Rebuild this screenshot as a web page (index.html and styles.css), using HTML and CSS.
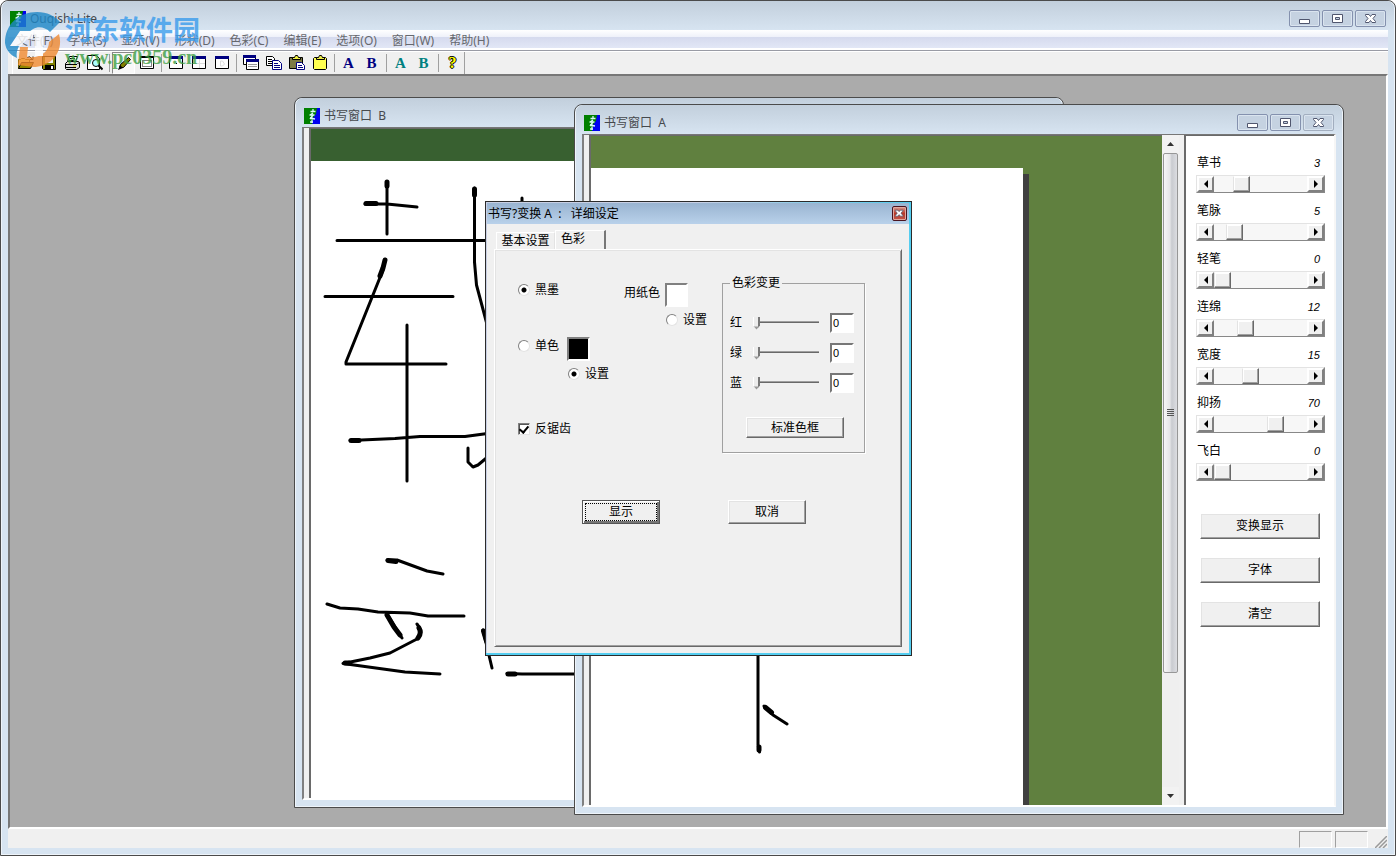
FILE: index.html
```html
<!DOCTYPE html>
<html lang="zh-CN">
<head>
<meta charset="utf-8">
<title>Ouqishi Lite</title>
<link rel="stylesheet" href="styles.css">
</head>
<body>
<svg class="defs" aria-hidden="true">
  <defs>
    <symbol id="app" viewBox="0 0 16 16">
      <path fill="#008000" d="M0 0h16v16H0z"/><path fill="#0000f0" d="M13 0h3v16H8l1-6 3-4z"/>
      <path fill="none" stroke="#d8f8f8" stroke-width="1.3" d="M9 1v3M6.500 3.500h5M9 5L6 7M5.500 7h5M9 7l-3 4M6 10l5 1M8 9v6M6 14h3"/>
    </symbol>
    <symbol id="min" viewBox="0 0 12 12"><path fill="#fff" stroke="#50566e" d="M.5 6.500h10v4H.5z"/></symbol>
    <symbol id="max" viewBox="0 0 12 12"><path fill="#fff" stroke="#50566e" d="M.5 1.500h10v8H.5z"/><path fill="#c5d2e2" stroke="#50566e" d="M3.500 4.500h4v2h-4z"/></symbol>
    <symbol id="cls" viewBox="0 0 12 12"><path fill="#fff" stroke="#50566e" d="M.5 1.500h3.500l1.500 2 1.500-2h3.500v1L8 5.500l2.500 3v1H7l-1.500-2-1.500 2H.5v-1l2.500-3-2.500-3z"/></symbol>
    <symbol id="win" viewBox="0 0 16 16"><path fill="#fff" stroke="#000" d="M1.500 1.500h13v12h-13z"/><path fill="#000080" d="M1 1h14v3H1z"/></symbol>
  </defs>
</svg>
<div class="app">
  <header class="titlebar">
    <svg class="app-icon"><use href="#app"/></svg>
    <h1 class="caption">Ouqishi Lite</h1>
    <div class="win-buttons">
      <button class="win-btn" aria-label="最小化"><svg><use href="#min"/></svg></button>
      <button class="win-btn" aria-label="最大化"><svg><use href="#max"/></svg></button>
      <button class="win-btn" aria-label="关闭"><svg><use href="#cls"/></svg></button>
    </div>
  </header>
  <nav class="menubar">
    <button>文件(F)</button><button>字体(S)</button><button>显示(V)</button><button>形状(D)</button><button>色彩(C)</button><button>编辑(E)</button><button>选项(O)</button><button>窗口(W)</button><button>帮助(H)</button>
  </nav>
  <div class="toolbar">
    <div class="tools">
      <button aria-label="打开"><svg viewBox="0 0 16 16"><path fill="#ff9" stroke="#6b6400" d="M.5 13.500v-9h2l1-1h3l1 1h4v3"/><path fill="#8c8400" stroke="#000" d="M.5 13.500l3-6h12l-3 6z"/><path fill="none" stroke="#000" d="M9 2.500q3-2 5 1.500M15 1.500v3h-3"/></svg></button>
      <button aria-label="保存"><svg viewBox="0 0 16 16"><path fill="#808000" stroke="#000" d="M1.500 1.500h13v13h-12l-1-1z"/><path fill="#f4f4f4" d="M4 2h8v6H4z"/><path d="M4 10h9v5H4z"/><path fill="#fff" d="M10 11h2v3h-2z"/></svg></button>
      <button aria-label="打印"><svg viewBox="0 0 16 16"><path fill="#fff" stroke="#000" d="M5.500 1.500h8l-2 5h-8z"/><path stroke="#000" d="M6 3.500h5M5 5.500h5"/><path fill="#ddd" stroke="#000" d="M1.500 8.500l2-2h11l1 1v5l-3 2h-10l-1-1z"/><path stroke="#000" d="M1 9.500h12M2 12.500h10M13.500 9l2-2"/><path stroke="#dd0" d="M9 11h3"/></svg></button>
      <button aria-label="打印预览"><svg viewBox="0 0 16 16"><path fill="#fff" stroke="#000" d="M.5 .5h9l3 3v11H.5z"/><circle cx="9" cy="8" r="3.500" fill="#aff" stroke="#000"/><path stroke="#000" stroke-width="2" d="M11.500 10.500l4 4"/></svg></button>
      <span class="sep"></span>
      <button class="pressed" aria-label="笔"><svg viewBox="0 0 16 16"><path fill="#808000" stroke="#000" d="M3.500 12.500l1-3 8-7 2 2-7 8z"/><path d="M2 15l2-5 3 3z"/></svg></button>
      <button aria-label="选择"><svg viewBox="0 0 16 16"><path fill="#fff" stroke="#000" d="M1.500 1.500h13v12h-13z"/><path fill="#000" d="M1 1h14v2H1z"/><path fill="none" stroke="#000" stroke-dasharray="1 1" d="M3.500 5.500h9v6h-9z"/></svg></button>
      <span class="sep"></span>
      <button aria-label="窗口一"><svg viewBox="0 0 16 16"><use href="#win"/><path d="M8 8h1v1H8z"/></svg></button>
      <button aria-label="窗口二"><svg viewBox="0 0 16 16"><use href="#win"/><path stroke="#ddd" d="M8.500 4v9M2 8.500h12"/></svg></button>
      <button aria-label="窗口三"><svg viewBox="0 0 16 16"><use href="#win"/><path fill="none" stroke="#ddd" d="M6.500 6v5h2l2-2-2-3z"/></svg></button>
      <span class="sep"></span>
      <button aria-label="层叠"><svg viewBox="0 0 16 16"><path fill="#fff" stroke="#000" d="M.5 .5h12v9H.5z"/><path fill="#000080" d="M0 0h13v3H0z"/><path fill="#fff" stroke="#000" d="M3.500 4.500h12v10h-12z"/><path fill="#000080" d="M3 4h13v3H3z"/><path stroke="#999" d="M5 9.500h9M5 11.500h9"/></svg></button>
      <button aria-label="复制"><svg viewBox="0 0 16 16"><path fill="#fff" stroke="#000" d="M.5 1.500h6l2 2v7h-8z"/><path fill="#fff" stroke="#000080" d="M6.500 5.500h6l3 3v6h-9z"/><path stroke="#000" d="M2 4.500h4M2 6.500h4M2 8.500h4"/><path stroke="#000080" d="M8 8.500h4M8 10.500h6M8 12.500h6"/></svg></button>
      <button aria-label="粘贴"><svg viewBox="0 0 16 16"><path fill="#7d7b45" stroke="#000" d="M.5 2.500h13v11H.5z"/><path fill="#ee4" stroke="#000" d="M3.500 4.500v-2h2l1-2h2l1 2h2v2z"/><path fill="#fff" stroke="#000080" d="M7.500 7.500h5l3 3v4h-8z"/><path stroke="#000080" d="M9 10.500h4M9 12.500h5"/></svg></button>
      <button aria-label="剪贴板"><svg viewBox="0 0 16 16"><path fill="#ffff50" stroke="#000" d="M2.500 2.500h11l1 1v10l-1 1h-11l-1-1v-10z"/><path fill="#ee4" stroke="#000" d="M4.500 4.500v-2h2l1-2h2l1 2h2v2z"/></svg></button>
      <span class="sep"></span>
      <button class="letter navy">A</button><button class="letter navy">B</button>
      <span class="sep"></span>
      <button class="letter teal">A</button><button class="letter teal">B</button>
      <span class="sep"></span>
      <button class="letter help">?</button>
    </div>
  </div>

  <main class="workspace">
    <section class="window window-b">
      <header class="titlebar">
        <svg class="app-icon"><use href="#app"/></svg><h2 class="caption">书写窗口&nbsp; B</h2>
      </header>
      <div class="client">
        <div class="canvas dark">
          <div class="paper">
            <svg class="ink"><g transform="translate(-311 -161)">
              <path d="M387 182v52M365 204l22 0 30 3M337 240.500h160M385 260l-2 10-37 92v2h100M325 296.500h128M407 325v156M350 440.500l45-2 25-2h45l30-4M474.500 188v74l2 23 12 45M468 448v14l5 5 5-2 12-10M522 198v6"/>
              <path d="M387 560h10l30 11 16 3M327 604l13 4 18 1 20 3 32 1 18 3h36M387 614l15 24M417 624q7 9 0 15l-27 14-20 5-27 5.500 62 8.500 35 2M483 630l9 38M507 673.500l15 .5h60"/>
              <path class="heavy" d="M387 182v4M366 203.500h10M385 260l-2 8-3 8M388 560.500l8 1M387 615l7 12 6 8M419 628q3 5-1 10M345 663h4M508 674h7M351 440.500h8M474.500 189v6M483.500 631l3 10"/>
            </g></svg>
          </div>
        </div>
      </div>
    </section>

    <section class="window window-a">
      <header class="titlebar">
        <svg class="app-icon"><use href="#app"/></svg><h2 class="caption">书写窗口&nbsp; A</h2>
        <div class="win-buttons">
          <button class="win-btn" aria-label="最小化"><svg><use href="#min"/></svg></button>
          <button class="win-btn" aria-label="最大化"><svg><use href="#max"/></svg></button>
          <button class="win-btn dim" aria-label="关闭"><svg><use href="#cls"/></svg></button>
        </div>
      </header>
      <div class="client">
        <div class="canvas olive">
          <div class="paper">
            <svg class="ink"><g transform="translate(-591 -168)">
              <path d="M758 650v95l1.500 7M764 706l9 9 14 9"/><path class="heavy" d="M765.500 707.500l6 5M759 747v3"/>
            </g></svg>
          </div>
        </div>
        <div class="vscroll">
          <button aria-label="向上"><svg viewBox="0 0 7 4"><path fill="#333" d="M3.500 0L7 4H0z"/></svg></button>
          <div class="vtrack"><div class="vthumb"><i></i><i></i><i></i><i></i></div></div>
          <button aria-label="向下"><svg viewBox="0 0 7 4"><path fill="#333" d="M0 0h7L3.500 4z"/></svg></button>
        </div>
        <aside class="panel">
          <div class="param"><label for="p1">草书</label><output for="p1">3</output><div class="hscroll"><button class="prev" aria-label="减"></button><input id="p1" type="range" max="12" value="3"><button class="next" aria-label="加"></button></div></div>
          <div class="param"><label for="p2">笔脉</label><output for="p2">5</output><div class="hscroll"><button class="prev" aria-label="减"></button><input id="p2" type="range" max="31" value="5"><button class="next" aria-label="加"></button></div></div>
          <div class="param"><label for="p3">轻笔</label><output for="p3">0</output><div class="hscroll"><button class="prev" aria-label="减"></button><input id="p3" type="range" max="100" value="0"><button class="next" aria-label="加"></button></div></div>
          <div class="param"><label for="p4">连绵</label><output for="p4">12</output><div class="hscroll"><button class="prev" aria-label="减"></button><input id="p4" type="range" max="40" value="12"><button class="next" aria-label="加"></button></div></div>
          <div class="param"><label for="p5">宽度</label><output for="p5">15</output><div class="hscroll"><button class="prev" aria-label="减"></button><input id="p5" type="range" max="41" value="15"><button class="next" aria-label="加"></button></div></div>
          <div class="param"><label for="p6">抑扬</label><output for="p6">70</output><div class="hscroll"><button class="prev" aria-label="减"></button><input id="p6" type="range" max="100" value="70"><button class="next" aria-label="加"></button></div></div>
          <div class="param"><label for="p7">飞白</label><output for="p7">0</output><div class="hscroll"><button class="prev" aria-label="减"></button><input id="p7" type="range" max="100" value="0"><button class="next" aria-label="加"></button></div></div>
          <div class="panel-actions">
            <button class="btn">变换显示</button><button class="btn">字体</button><button class="btn">清空</button>
          </div>
        </aside>
      </div>
    </section>

    <form class="dialog" role="dialog" aria-labelledby="dlg-title">
      <header class="dialog-title">
        <h2 id="dlg-title">书写?变换 A&nbsp; :&nbsp; &nbsp;详细设定</h2>
        <button type="button" class="dialog-close" aria-label="关闭"><svg viewBox="0 0 12 12"><use href="#cls"/></svg></button>
      </header>
      <div class="dialog-body">
        <div class="tabs" role="tablist">
          <button type="button" role="tab">基本设置</button><button type="button" role="tab" class="active" aria-selected="true">色彩</button>
        </div>
        <div class="pane">
          <div class="options">
            <div class="ink-options">
              <label class="choice"><input type="radio" name="ink" checked>黑墨</label>
              <div class="mono-row">
                <label class="choice"><input type="radio" name="ink">单色</label>
                <span class="swatch black"></span>
              </div>
              <label class="choice set-ink"><input type="radio" name="set" checked>设置</label>
              <label class="choice antialias"><input type="checkbox" checked>反锯齿</label>
            </div>
            <div class="paper-options">
              <div class="paper-row"><span>用纸色</span><span class="swatch"></span></div>
              <label class="choice"><input type="radio" name="set">设置</label>
            </div>
            <fieldset class="colors">
              <legend>色彩变更</legend>
              <div class="color-row"><label for="r">红</label><input id="r" type="range" max="255" value="0"><input type="text" value="0" aria-label="红"></div>
              <div class="color-row"><label for="g">绿</label><input id="g" type="range" max="255" value="0"><input type="text" value="0" aria-label="绿"></div>
              <div class="color-row"><label for="b">蓝</label><input id="b" type="range" max="255" value="0"><input type="text" value="0" aria-label="蓝"></div>
              <button type="button" class="btn">标准色框</button>
            </fieldset>
          </div>
          <div class="dialog-actions">
            <button type="button" class="btn default"><span>显示</span></button>
            <button type="button" class="btn">取消</button>
          </div>
        </div>
      </div>
    </form>
  </main>

  <footer class="statusbar">
    <span class="cell"></span><span class="cell"></span>
    <svg class="grip" viewBox="0 0 12 12"><path stroke="#999" stroke-width="1.500" d="M0 12L12 0M4 12l8-8M8 12l4-4"/></svg>
  </footer>

  <div class="watermark">
    <svg viewBox="0 0 56 56">
      <path fill="#1e88c8" d="M0 31C0 12 14 0 32 0c10 0 18 4 23 10L45 20C38 13 28 14 23 22l-8 10c-3 6-4 9-3 14C5 43 1 38 0 31z"/>
      <path fill="#f08a30" d="M54 22c5 18-8 33-26 33L13 53l2-18h8l-1 10c14 2 22-6 22-15z"/>
      <path fill="#fff" d="M15 19h13v8h-6l-6 7H5zM30 18h8v26h-8z"/>
    </svg>
    <div class="wm-text"><span class="wm-name">河东软件园</span><span class="wm-url">www.pc0359.cn</span></div>
  </div>
</div>
</body>
</html>
```
FILE: styles.css
```css
* { box-sizing: border-box; }
body { margin: 0; background: #fff; color: #000; font: 12px/16px "Liberation Sans", "Noto Sans CJK SC", sans-serif; }
button, input { font: inherit; color: inherit; margin: 0; padding: 0; }
h1, h2 { margin: 0; font-size: 12px; font-weight: 400; }
.defs { position: absolute; width: 0; height: 0; }

.app { position: relative; display: flex; flex-direction: column; min-height: 100vh; padding: 0 7px 7px; border: 1px solid #4b4b4b; border-radius: 8px 8px 0 0; background: #d7e4f1; box-shadow: inset 0 0 0 1px #eef4fa; }
.titlebar { display: flex; align-items: center; }
.app > .titlebar { height: 29px; margin: 0 -6px; padding: 6px 8px 0; background: linear-gradient(#c2cfdc, #d7e4f1); border-radius: 7px 7px 0 0; }
.app-icon { width: 16px; height: 16px; flex: none; margin-right: 4px; }
.caption { flex: 1; font-family: "Noto Sans", "Noto Sans CJK SC", sans-serif; color: #46494d; white-space: nowrap; }
.win-buttons { display: flex; gap: 2px; }
.win-btn { display: flex; align-items: center; justify-content: center; width: 31px; height: 17px; border: 1px solid #8491ae; border-radius: 2px; background: #c5d2e1; box-shadow: inset 0 0 0 1px #dae4ef; }
.win-btn svg { width: 12px; height: 12px; }
.win-btn.dim { border-color: #a2aebf; }

.menubar { display: flex; gap: 1px; height: 21px; padding: 2px 0 1px 1px; border-bottom: 1px solid #999ba5; background: linear-gradient(#fff 0, #eef1fa 7px, #d5daee 7px, #e2e7f6 18px, #fff 18px); }
.menubar button { padding: 0 7px; border: 0; background: none; font-family: "Noto Sans", "Noto Sans CJK SC", sans-serif; color: #66686e; }
.toolbar { height: 23px; background: #f0f0f0; border-top: 1px solid #fff; }
.tools { display: flex; align-items: center; width: max-content; height: 22px; margin-left: 4px; padding-left: 1px; border-left: 1px solid #fff; border-right: 1px solid #a0a0a0; }
.tools button { display: flex; align-items: center; justify-content: center; width: 23px; height: 22px; border: 0; background: none; }
.tools svg { width: 16px; height: 16px; }
.tools .pressed { border: 1px solid; border-color: #888 #fff #fff #888; background: #f8f8f8; }
.sep { width: 1px; height: 18px; margin: 0 2px 0 3px; background: #a0a0a0; }
.tools .letter { font: 700 15px/16px "Liberation Serif", serif; }
.tools .navy { color: #000080; }
.tools .teal { color: #008080; }
.tools .help { color: #ff0; font-size: 16px; text-shadow: 1px 0 #000, -1px 0 #000, 0 1px #000, 0 -1px #000; }

.workspace { position: relative; flex: 1; overflow: hidden; border: 2px solid; border-color: #777 #fff #fff #777; background: #ababab; }
.window { position: absolute; display: flex; flex-direction: column; width: 770px; height: 711px; padding: 0 7px 7px; border: 1px solid #4b4b4b; border-radius: 8px 8px 0 0; background: #d7e4f1; box-shadow: inset 0 0 0 1px #eef4fa; }
.window-b { left: 284px; top: 21px; }
.window-a { left: 564px; top: 28px; }
.window .titlebar { height: 29px; margin: 0 -6px; padding: 6px 8px 0; background: linear-gradient(#c2cfdc, #d7e4f1); border-radius: 7px 7px 0 0; }
.client { display: flex; flex: 1; min-height: 0; padding-left: 5px; border: 2px solid; border-color: #777 #f6f6f6 #fff #808080; border-top-width: 1px; background: #f0f0f0; }
.canvas { flex: 1; min-width: 0; display: flex; padding-top: 32px; overflow: hidden; border-left: 2px solid #6a6a6a; border-top: 1px solid #6a6a6a; }
.dark { background: #386030; }
.olive { background: #60803f; }
.paper { flex: 1; background: #fff; }
.olive .paper { margin-right: 139px; box-shadow: 6px 6px #404040; }
.ink { display: block; width: 100%; height: 100%; fill: none; stroke: #000; stroke-width: 3; stroke-linecap: round; stroke-linejoin: round; }
.heavy { stroke-width: 5; }

.vscroll { display: flex; flex-direction: column; width: 17px; background: #efefef; }
.vscroll button { display: flex; align-items: center; justify-content: center; height: 18px; border: 0; background: #f2f2f2; }
.vscroll svg { width: 7px; height: 4px; }
.vtrack { flex: 1; }
.vthumb { display: flex; flex-direction: column; align-items: center; justify-content: center; gap: 1px; width: 15px; height: 82%; margin-left: 1px; border: 1px solid #979797; border-radius: 2px; background: linear-gradient(90deg, #f6f6f6 0, #e6e6e8 45%, #c9cbd0 60%, #dcdde1); }
.vthumb i { width: 7px; height: 1px; background: #555; }

.panel { width: 150px; margin-left: 5px; padding: 19px 10px 0 11px; border-left: 2px solid #6a6a6a; border-top: 1px solid #6a6a6a; background: #fff; }
.param { display: grid; grid-template-columns: 1fr auto; row-gap: 4px; margin-bottom: 10px; }
.param output { padding-right: 4px; font-style: italic; font-size: 11px; }
.hscroll { grid-column: 1 / -1; display: flex; height: 18px; border: 1px solid; border-color: #e3e3e3 #888 #888 #e3e3e3; margin: 0 -1px 0 -1px; }
.hscroll button { display: flex; align-items: center; justify-content: center; width: 17px; flex: none; border: 2px solid; border-color: #fff #808080 #808080 #fff; background: #f0f0f0; }
.hscroll button::before { content: ""; border: 4px solid transparent; }
.hscroll .prev::before { border-left-width: 0; border-right-color: #000; }
.hscroll .next::before { border-right-width: 0; border-left-color: #000; }
.hscroll input { appearance: none; flex: 1; min-width: 0; height: 16px; background: #f7f7f7; }
.hscroll input::-webkit-slider-thumb { appearance: none; width: 17px; height: 16px; border: 1px solid; border-color: #fff #696969 #696969 #e3e3e3; background: #f0f0f0; box-shadow: inset -1px -1px #a0a0a0, inset 1px 1px #fff; }
.panel-actions { display: flex; flex-direction: column; gap: 18px; padding: 22px 4px 0 3px; }
.panel-actions .btn { height: 26px; }

.btn { display: flex; align-items: center; justify-content: center; border: 1px solid; border-color: #fff #696969 #696969 #fff; background: #f0f0f0; box-shadow: inset -1px -1px #a0a0a0, inset 1px 1px #e3e3e3; }

.dialog { position: absolute; left: 475px; top: 125px; width: 427px; padding: 1px 2px 2px 1px; border: 1px solid #2b2b2b; background: linear-gradient(90deg, #c8cfe4 50%, #54cdf0); box-shadow: inset 0 -2px #54cdf0; }
.dialog-title { display: flex; align-items: center; justify-content: space-between; height: 21px; padding: 0 2px 0 1px; background: linear-gradient(#99b4d1, #b9d1ea); }
.dialog-title h2 { font-family: "Noto Sans", "Noto Sans CJK SC", sans-serif; }
.dialog-close { display: flex; align-items: center; justify-content: center; width: 15px; height: 15px; border: 1px solid #4a1420; border-radius: 2px; background: linear-gradient(#d99a90, #b8392a 50%, #c4564a); box-shadow: inset 0 0 0 1px #e0a8a0; }
.dialog-close svg { width: 9px; height: 9px; }
.dialog-body { padding: 6px 7px; background: #f0f0f0; }
.tabs { display: flex; align-items: flex-end; padding-left: 2px; }
.tabs button { height: 17px; width: 59px; border: 1px solid; border-color: #fff #e3e3e3 #fff #fff; border-bottom: 0; background: #f0f0f0; }
.tabs .active { width: 51px; height: 19px; padding: 0 14px 3px 0; border-right: 2px solid #777; }
.pane { padding: 29px 35px 121px 22px; border: 1px solid; border-color: #fff #696969 #696969 #fff; box-shadow: inset 1px 1px #e3e3e3, inset -1px -1px #a0a0a0; }
.pane { padding: 30px 36px 122px 23px; }
.options { display: flex; }
.choice { display: flex; align-items: center; gap: 5px; height: 20px; }
.choice input { appearance: none; width: 12px; height: 12px; border: 1px solid; border-color: #808080 #e3e3e3 #e3e3e3 #808080; background: #fff; }
.choice input[type=radio] { border-radius: 50%; }
.choice input[type=radio]:checked { background: radial-gradient(circle, #000 2px, #fff 3px); }
.choice input[type=checkbox] { display: flex; align-items: center; justify-content: center; padding-bottom: 2px; box-shadow: inset 1px 1px #555; }
.choice input[type=checkbox]:checked::before { content: ""; width: 4px; height: 7px; border: solid #000; border-width: 0 2px 2px 0; transform: rotate(40deg); }
.ink-options { width: 106px; }
.mono-row { display: flex; gap: 8px; height: 23px; margin-top: 37px; }
.mono-row .choice { height: 17px; }
.swatch { width: 23px; height: 24px; border: 2px solid; border-color: #808080 #fff #fff #808080; background: #fff; }
.swatch.black { background: #000; }
.set-ink { margin: 4px 0 35px 50px; }
.paper-options { width: 98px; padding-top: 3px; }
.paper-row { display: flex; gap: 5px; height: 24px; line-height: 20px; }
.paper-options .choice { margin: 3px 0 0 42px; }
.colors { flex: 1; min-width: 0; margin: -4px 0 0; padding: 23px 10px 14px 7px; border: 1px solid #a0a0a0; box-shadow: 1px 1px #fff; }
.colors legend { padding: 0 2px; line-height: 14px; }
.color-row { display: flex; align-items: center; justify-content: space-between; height: 20px; margin-bottom: 10px; }
.color-row input[type=text] { width: 24px; height: 20px; padding: 0 1px; border: 2px solid; border-color: #777 #fff #fff #777; background: #fff; font-size: 11px; }
.color-row input[type=range] { appearance: none; width: 66px; height: 14px; background: linear-gradient(#a0a0a0 1px, #696969 1px) 3px 5px / 100% 2px no-repeat; }
.color-row input[type=range]::-webkit-slider-thumb { appearance: none; width: 7px; height: 13px; background: linear-gradient(transparent 9px, #999 10px), linear-gradient(90deg, #fff 1px, #ececec 1px, #ececec 5px, #777 5px); clip-path: polygon(0 0, 100% 0, 100% 70%, 50% 100%, 0 70%); }
.colors .btn { width: 98px; height: 21px; margin: 24px 0 0 16px; }
.dialog-actions { display: flex; gap: 68px; margin: 47px 0 0 64px; }
.dialog-actions .btn { width: 78px; height: 24px; }
.dialog-actions .default { padding: 2px; border: 1px solid #555; box-shadow: inset 1px 1px #fff, inset -2px -2px #777; }
.default span { flex: 1; border: 1px dotted #000; }

.statusbar { display: flex; align-items: flex-end; justify-content: flex-end; gap: 3px; height: 19px; padding-right: 1px; background: #f0f0f0; }
.cell { width: 33px; height: 17px; border: 1px solid; border-color: #a0a0a0 #fff #fff #a0a0a0; }
.grip { width: 12px; height: 12px; margin-left: 4px; }

.watermark { position: absolute; left: 4px; top: 11px; display: flex; opacity: .8; pointer-events: none; }
.watermark svg { width: 56px; height: 56px; margin-right: 4px; }
.wm-text { display: flex; flex-direction: column; }
.wm-name { font: 700 27px/34px "Noto Sans CJK SC", sans-serif; color: #3a9cec; }
.wm-url { font: 700 20px/22px "Liberation Serif", serif; color: #3fa046; }
```
